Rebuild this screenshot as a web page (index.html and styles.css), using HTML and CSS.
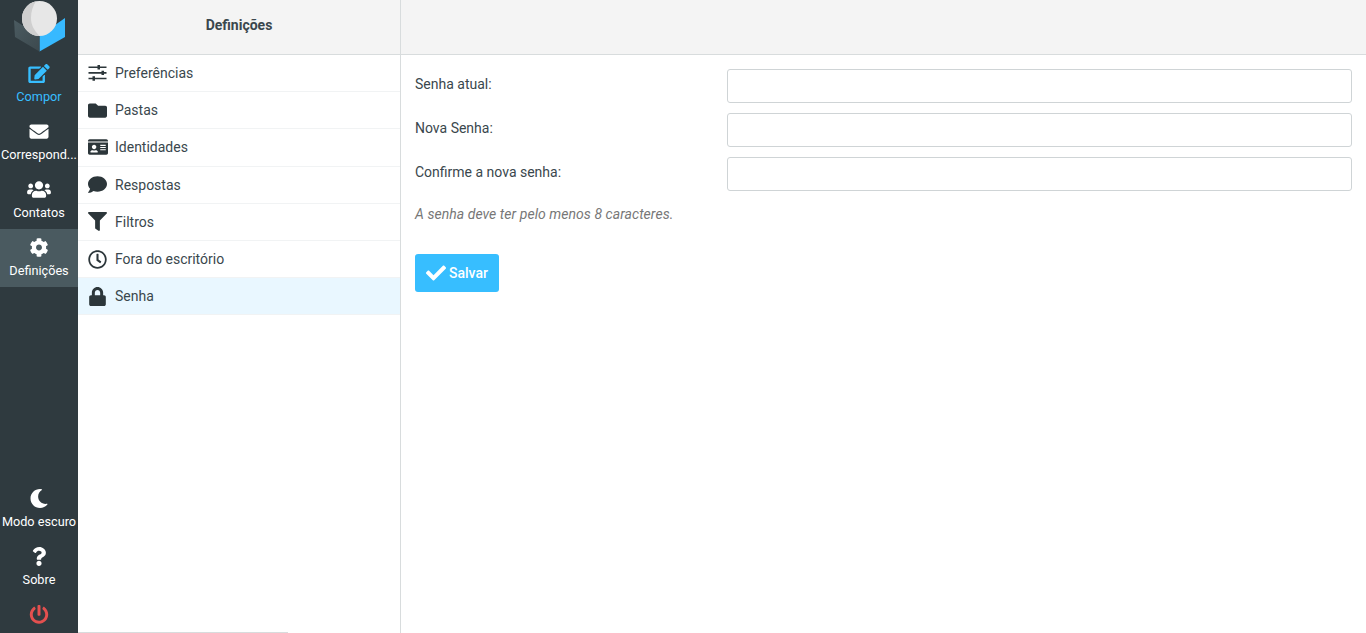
FILE: index.html
```html
<!DOCTYPE html>
<html lang="pt">
<head>
<meta charset="utf-8">
<title>Definições</title>
<link rel="stylesheet" href="styles.css">
</head>
<body>
<div class="app">
  <nav class="rail">
    <div class="logo">
      <svg width="52" height="53" viewBox="0 0 52 53">
        <defs>
          <linearGradient id="side" x1="0" y1="0" x2="1" y2="1">
            <stop offset="0" stop-color="#4b5b61"/>
            <stop offset="1" stop-color="#3c494e"/>
          </linearGradient>
        </defs>
        <path fill="#37b9ff" d="M51 18V37L25.500 51.500V36z"/>
        <path fill="url(#side)" d="M0 20L25.500 36V51.500L1 37z"/>
        <circle cx="25.500" cy="18.500" r="17.500" fill="#e7e7e7"/>
        <path fill="#cfcfcf" d="M22 1.350A17.500 17.500 0 0 0 25.500 36C20 30 17 25 17 18C17 11 19 6 22 1.350z"/>
      </svg>
    </div>
    <a class="rail-item accent">
      <svg class="rail-icon" viewBox="0 0 576 512"><path d="M402.600 83.200l90.200 90.200c3.800 3.800 3.800 10 0 13.800L274.400 405.600l-92.800 10.300c-12.400 1.400-22.900-9.100-21.500-21.500l10.300-92.800L388.800 83.200c3.800-3.800 10-3.800 13.800 0zm162-22.900l-48.800-48.800c-15.200-15.200-39.900-15.200-55.200 0l-35.400 35.400c-3.800 3.800-3.800 10 0 13.800l90.200 90.200c3.800 3.800 10 3.800 13.800 0l35.400-35.400c15.200-15.300 15.200-40 0-55.200zM384 346.200V448H64V128h229.800c3.200 0 6.200-1.300 8.500-3.500l40-40c7.600-7.600 2.200-20.500-8.500-20.500H48C21.500 64 0 85.500 0 112v352c0 26.500 21.500 48 48 48h352c26.500 0 48-21.500 48-48V306.200c0-10.700-12.900-16-20.500-8.500l-40 40c-2.200 2.300-3.500 5.300-3.500 8.500z"/></svg>
      <span>Compor</span>
    </a>
    <a class="rail-item">
      <svg class="rail-icon" viewBox="0 0 512 512"><path d="M502.300 190.800c3.900-3.100 9.700-.2 9.700 4.700V400c0 26.500-21.500 48-48 48H48c-26.500 0-48-21.500-48-48V195.600c0-5 5.700-7.800 9.700-4.700 22.400 17.400 52.100 39.500 154.100 113.600 21.100 15.400 56.700 47.800 92.200 47.600 35.700.3 72-32.800 92.300-47.600 102-74.100 131.600-96.300 154-113.700zM256 320c23.200.4 56.600-29.200 73.400-41.400 132.700-96.300 142.800-104.700 173.400-128.700 5.800-4.500 9.200-11.500 9.200-18.900v-19c0-26.500-21.500-48-48-48H48C21.500 64 0 85.500 0 112v19c0 7.400 3.400 14.300 9.200 18.900 30.600 23.900 40.700 32.400 173.400 128.700 16.800 12.200 50.200 41.800 73.400 41.400z"/></svg>
      <span>Correspond...</span>
    </a>
    <a class="rail-item">
      <svg class="rail-icon" viewBox="0 0 640 512"><path d="M96 224c35.300 0 64-28.700 64-64s-28.700-64-64-64-64 28.700-64 64 28.700 64 64 64zm448 0c35.300 0 64-28.700 64-64s-28.700-64-64-64-64 28.700-64 64 28.700 64 64 64zm32 32h-64c-17.600 0-33.500 7.100-45.100 18.600 40.300 22.100 68.900 62 75.100 109.400h66c17.700 0 32-14.300 32-32v-32c0-35.300-28.700-64-64-64zm-256 0c61.900 0 112-50.100 112-112S381.900 32 320 32 208 82.100 208 144s50.100 112 112 112zm76.800 32h-8.300c-20.800 10-43.900 16-68.500 16s-47.600-6-68.500-16h-8.300C179.600 288 128 339.600 128 403.200V432c0 26.500 21.500 48 48 48h288c26.500 0 48-21.500 48-48v-28.800c0-63.600-51.600-115.200-115.200-115.200zm-223.700-13.400C161.500 263.100 145.600 256 128 256H64c-35.300 0-64 28.700-64 64v32c0 17.700 14.300 32 32 32h65.900c6.300-47.400 34.900-87.300 75.200-109.400z"/></svg>
      <span>Contatos</span>
    </a>
    <a class="rail-item selected">
      <svg class="rail-icon" viewBox="0 0 512 512"><path d="M487.400 315.700l-42.600-24.600c4.300-23.200 4.300-47 0-70.200l42.600-24.600c4.900-2.800 7.100-8.600 5.500-14-11.100-35.600-30-67.800-54.700-94.600-3.800-4.100-10-5.100-14.800-2.300L380.800 110c-17.900-15.400-38.500-27.300-60.800-35.100V25.800c0-5.600-3.900-10.500-9.400-11.700-36.700-8.200-74.300-7.800-109.200 0-5.500 1.200-9.400 6.100-9.400 11.700V75c-22.200 7.900-42.800 19.800-60.800 35.100L88.700 85.500c-4.900-2.800-11-1.900-14.800 2.300-24.700 26.700-43.600 58.900-54.700 94.600-1.700 5.400.6 11.200 5.500 14L67.300 221c-4.300 23.200-4.300 47 0 70.200l-42.600 24.600c-4.900 2.800-7.100 8.600-5.500 14 11.100 35.600 30 67.800 54.700 94.600 3.800 4.100 10 5.100 14.800 2.300l42.600-24.600c17.900 15.400 38.500 27.300 60.800 35.100v49.200c0 5.600 3.900 10.500 9.400 11.700 36.700 8.200 74.300 7.800 109.200 0 5.500-1.200 9.400-6.100 9.400-11.700v-49.200c22.200-7.900 42.800-19.800 60.800-35.100l42.600 24.600c4.900 2.800 11 1.900 14.800-2.300 24.700-26.700 43.600-58.900 54.700-94.600 1.500-5.500-.7-11.300-5.600-14.100zM256 336c-44.100 0-80-35.900-80-80s35.900-80 80-80 80 35.900 80 80-35.900 80-80 80z"/></svg>
      <span>Definições</span>
    </a>
    <div class="rail-spacer"></div>
    <a class="rail-item">
      <svg class="rail-icon" viewBox="0 0 512 512"><path d="M283.211 512c78.962 0 151.079-35.925 198.857-94.792 7.068-8.708-.639-21.430-11.562-19.350-124.203 23.654-238.262-71.576-238.262-196.954 0-72.222 38.662-138.635 101.498-174.394 9.686-5.512 7.250-20.197-3.756-22.230A258.156 258.156 0 0 0 283.211 0c-141.309 0-256 114.511-256 256 0 141.309 114.511 256 256 256z"/></svg>
      <span>Modo escuro</span>
    </a>
    <a class="rail-item">
      <svg class="rail-icon" viewBox="0 0 384 512"><path d="M202.021 0C122.202 0 70.503 32.703 29.914 91.026c-7.363 10.580-5.093 25.086 5.178 32.874l43.138 32.709c10.373 7.865 25.132 6.026 33.253-4.148 25.049-31.381 43.630-49.449 82.757-49.449 30.764 0 68.816 19.799 68.816 49.631 0 22.552-18.617 34.134-48.993 51.164-35.423 19.860-82.299 44.576-82.299 106.405V320c0 13.255 10.745 24 24 24h72.471c13.255 0 24-10.745 24-24v-5.773c0-42.860 125.268-44.645 125.268-160.627C377.504 66.256 286.902 0 202.021 0zM192 373.459c-38.196 0-69.271 31.075-69.271 69.271 0 38.195 31.075 69.270 69.271 69.270s69.271-31.075 69.271-69.271-31.075-69.270-69.271-69.270z"/></svg>
      <span>Sobre</span>
    </a>
    <a class="rail-item logout">
      <svg class="rail-icon" viewBox="0 0 512 512"><path d="M400 54.100c63 45 104 118.600 104 201.900 0 136.800-110.800 247.700-247.500 248C120 504.300 8.200 393 8 256.400 7.900 173.100 48.900 99.300 111.800 54.200c11.700-8.300 28-4.800 35 7.700L162.600 90c5.900 10.500 3.100 23.800-6.600 31-41.500 30.800-68 79.600-68 134.900-.1 92.300 74.500 168.100 168 168.100 91.600 0 168.600-74.200 168-169.100-.3-51.800-24.700-101.800-68.100-134-9.700-7.200-12.400-20.500-6.500-30.900l15.800-28.100c7-12.400 23.200-16.100 35-7.800zM296 264V24c0-13.300-10.700-24-24-24h-32c-13.300 0-24 10.700-24 24v240c0 13.300 10.700 24 24 24h32c13.300 0 24-10.700 24-24z"/></svg>
    </a>
  </nav>

  <aside class="sections">
    <header class="head head-title">Definições</header>
    <ul class="menu">
      <li class="menu-item">
        <span class="menu-icon"><svg class="ic" width="19" height="17" viewBox="0 0 19 17"><path d="M.5 1.400h18V3H.5zM9.500 0H12v4.400H9.500zM.5 7.100h18v1.600H.5zM13.500 5.700H16v4.400h-2.500zM.5 12.700h18v1.600H.5zM4.500 11.300H7v4.400H4.500z"/></svg></span>
        <span>Preferências</span>
      </li>
      <li class="menu-item">
        <span class="menu-icon"><svg class="ic" width="19" height="19" viewBox="0 0 512 512"><path d="M464 128H272l-64-64H48C21.490 64 0 85.490 0 112v288c0 26.510 21.490 48 48 48h416c26.510 0 48-21.490 48-48V176c0-26.510-21.490-48-48-48z"/></svg></span>
        <span>Pastas</span>
      </li>
      <li class="menu-item">
        <span class="menu-icon"><svg class="ic" width="20" height="18" viewBox="0 0 576 512"><path d="M528 32H48C21.500 32 0 53.500 0 80v16h576V80c0-26.500-21.500-48-48-48zM0 432c0 26.500 21.500 48 48 48h480c26.500 0 48-21.500 48-48V128H0v304zm352-232c0-4.400 3.600-8 8-8h144c4.400 0 8 3.600 8 8v16c0 4.400-3.600 8-8 8H360c-4.400 0-8-3.600-8-8v-16zm0 64c0-4.400 3.600-8 8-8h144c4.400 0 8 3.600 8 8v16c0 4.400-3.600 8-8 8H360c-4.400 0-8-3.600-8-8v-16zm0 64c0-4.400 3.600-8 8-8h144c4.400 0 8 3.600 8 8v16c0 4.400-3.600 8-8 8H360c-4.400 0-8-3.600-8-8v-16zM176 192c35.300 0 64 28.700 64 64s-28.700 64-64 64-64-28.700-64-64 28.700-64 64-64zM67.100 396.200C75.500 370.500 99.600 352 128 352h8.200c12.300 5.100 25.700 8 39.800 8s27.600-2.900 39.800-8h8.200c28.400 0 52.500 18.500 60.900 44.200 3.200 9.900-5.200 19.800-15.600 19.800H82.700c-10.400 0-18.800-10-15.600-19.800z"/></svg></span>
        <span>Identidades</span>
      </li>
      <li class="menu-item">
        <span class="menu-icon"><svg class="ic" width="19" height="19" viewBox="0 0 512 512"><path d="M256 32C114.600 32 0 125.100 0 240c0 49.600 21.400 95 57 130.700C44.500 421.100 2.700 466 2.200 466.500c-2.200 2.300-2.800 5.700-1.500 8.700S4.800 480 8 480c66.300 0 116-31.800 140.600-51.400 32.700 12.300 69 19.400 107.400 19.400 141.400 0 256-93.100 256-208S397.400 32 256 32z"/></svg></span>
        <span>Respostas</span>
      </li>
      <li class="menu-item">
        <span class="menu-icon"><svg class="ic" width="19" height="19" viewBox="0 0 512 512"><path d="M487.976 0H24.028C2.710 0-8.047 25.866 7.058 40.971L192 225.941V432c0 7.831 3.821 15.170 10.237 19.662l80 55.980C298.020 518.690 320 507.493 320 487.980V225.941l184.947-184.970C520.021 25.896 509.338 0 487.976 0z"/></svg></span>
        <span>Filtros</span>
      </li>
      <li class="menu-item">
        <span class="menu-icon"><svg class="ic" width="19" height="19" viewBox="0 0 512 512"><path d="M256 8C119 8 8 119 8 256s111 248 248 248 248-111 248-248S393 8 256 8zm0 448c-110.500 0-200-89.500-200-200S145.500 56 256 56s200 89.500 200 200-89.500 200-200 200zm61.800-104.400l-84.900-61.700c-3.100-2.300-4.900-5.900-4.900-9.700V116c0-6.600 5.400-12 12-12h32c6.600 0 12 5.400 12 12v141.700l66.800 48.600c5.400 3.900 6.500 11.400 2.600 16.800L334.600 349c-3.900 5.300-11.400 6.500-16.800 2.600z"/></svg></span>
        <span>Fora do escritório</span>
      </li>
      <li class="menu-item current">
        <span class="menu-icon"><svg class="ic lock" width="17" height="19" viewBox="0 0 448 512"><path d="M400 224h-24v-72C376 68.200 307.800 0 224 0S72 68.200 72 152v72H48c-26.500 0-48 21.500-48 48v192c0 26.500 21.500 48 48 48h352c26.500 0 48-21.500 48-48V272c0-26.500-21.500-48-48-48zm-104 0H152v-72c0-39.700 32.300-72 72-72s72 32.300 72 72v72z"/></svg></span>
        <span>Senha</span>
      </li>
    </ul>
    <div class="scroll-line"></div>
  </aside>

  <main class="content">
    <header class="head"></header>
    <form class="form">
      <div class="field">
        <label class="field-label" for="cur">Senha atual:</label>
        <input class="field-input" id="cur" type="password">
      </div>
      <div class="field">
        <label class="field-label" for="new">Nova Senha:</label>
        <input class="field-input" id="new" type="password">
      </div>
      <div class="field">
        <label class="field-label" for="conf">Confirme a nova senha:</label>
        <input class="field-input" id="conf" type="password">
      </div>
      <p class="hint">A senha deve ter pelo menos 8 caracteres.</p>
      <button class="save" type="button">
        <svg class="save-icon" viewBox="0 0 512 512"><path d="M173.898 439.404l-166.400-166.400c-9.997-9.997-9.997-26.206 0-36.204l36.203-36.204c9.997-9.998 26.207-9.998 36.204 0L192 312.690 432.095 72.596c9.997-9.997 26.207-9.997 36.204 0l36.203 36.204c9.997 9.997 9.997 26.206 0 36.204l-294.400 294.401c-9.998 9.997-26.207 9.997-36.204-.001z"/></svg>
        <span>Salvar</span>
      </button>
    </form>
  </main>
</div>
</body>
</html>
```
FILE: styles.css
```css
* { box-sizing: border-box; }
html, body { margin: 0; height: 100%; overflow: hidden; }
body {
  font-family: Roboto, "Liberation Sans", sans-serif;
  font-size: 14px;
  color: #3a474d;
  background: #fff;
}
.app { display: flex; height: 633px; }

.rail {
  width: 78px;
  flex: none;
  display: flex;
  flex-direction: column;
  background: #2f3a3f;
  overflow: hidden;
}
.logo { height: 55px; padding-left: 14px; flex: none; }
.logo svg { display: block; }
.rail-item {
  height: 58px;
  flex: none;
  display: flex;
  flex-direction: column;
  align-items: center;
  color: #fff;
  font-size: 12.7px;
  line-height: 16px;
  padding-top: 9px;
  white-space: nowrap;
}
.rail-icon { width: 24px; height: 19px; fill: currentColor; display: block; margin-bottom: 6px; flex: none; }
.accent { color: #37beff; }
.selected { background: #4a5a60; }
.rail-spacer { flex: 1; }
.logout { height: 37px; color: #e3504f; }

.sections {
  width: 323px;
  flex: none;
  border-right: 1px solid #d8dcdd;
  position: relative;
}
.head {
  height: 55px;
  background: #f4f4f4;
  border-bottom: 1px solid #d8dcdd;
}
.head-title {
  display: flex;
  align-items: center;
  justify-content: center;
  font-weight: 700;
  padding-bottom: 4px;
}
.menu { list-style: none; margin: 0; padding: 0; }
.menu-item {
  height: 37.2px;
  display: flex;
  align-items: center;
  border-bottom: 1px solid #f1f3f4;
  padding-left: 10px;
}
.menu-icon { width: 27px; flex: none; display: flex; align-items: center; }
.ic { fill: #2c363a; display: block; }
.lock { margin-left: 1px; }
.current { background: #e9f7ff; }
.scroll-line {
  position: absolute;
  left: 0;
  bottom: 0;
  width: 210px;
  height: 1px;
  background: #d8dcdd;
}

.content { flex: 1; min-width: 0; }
.form { padding: 14px 14px 0; }
.field { display: flex; margin-bottom: 10px; }
.field-label { width: 312px; flex: none; padding-top: 6px; line-height: 18px; }
.field-input {
  flex: 1;
  min-width: 0;
  height: 34px;
  border: 1px solid #cfd4d6;
  border-radius: 3px;
  background: #fff;
  padding: 0 10px;
}
.hint {
  margin: 0;
  padding-top: 3px;
  line-height: 20px;
  font-style: italic;
  letter-spacing: .05px;
  color: #777;
}
.save {
  margin-top: 30px;
  width: 84px;
  height: 38px;
  display: flex;
  align-items: center;
  padding: 0 0 0 11px;
  gap: 3px;
  border: 0;
  border-radius: 3px;
  background: #37beff;
  color: #fff;
  font-family: inherit;
  font-size: 14px;
  font-weight: 500;
}
.save-icon { width: 20px; height: 20px; fill: currentColor; flex: none; }
```
